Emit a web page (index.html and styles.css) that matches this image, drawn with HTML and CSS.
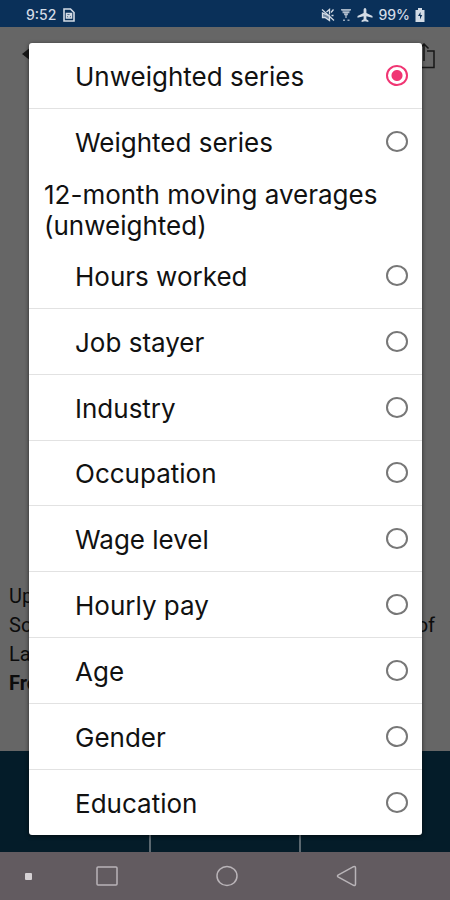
FILE: index.html
```html
<!DOCTYPE html>
<html lang="en">
<head>
<meta charset="utf-8">
<meta name="viewport" content="width=device-width, initial-scale=1">
<title>Series selection</title>
<link rel="stylesheet" href="styles.css">
</head>
<body>
<div class="screen">
  <header class="status">
    <span class="status-time">9:52</span>
    <svg class="status-doc" width="12" height="14" viewBox="0 0 12 14" fill="none" stroke="currentColor" stroke-width="1.6"><path d="M1 1h6.500l3.500 3.500V13H1zM3.500 5.500h5v4.500h-5zM4.500 7l1.500 1.500L8 6"/></svg>
    <span class="status-icons">
      <svg width="14" height="14" viewBox="0 0 14 14" fill="none" stroke="currentColor" stroke-width="1.300"><path d="M1 1.500l12 11M10 4.500l2.500-3M10.500 7.500h2"/><path d="M1.500 5v4.500H4l4.500 3V8z" fill="currentColor" fill-opacity=".5"/><path d="M5.500 4l3-2.500v5"/></svg>
      <svg width="12" height="14" viewBox="0 0 12 14" fill="none" stroke="currentColor" stroke-width="1.500"><path d="M1 1.800h10M2.500 4.500h7M4 6.500h4M6 7v3M3 12.300h2M7.500 12.300h2" opacity=".7"/><path d="M1 1.500h10L6 8z" fill="currentColor" fill-opacity=".5" stroke="none"/></svg>
      <svg width="16" height="14" viewBox="0 0 16 14" fill="currentColor"><path d="M8 0c1 0 1.400 1 1.400 2v3L15.500 8v1.700L9.400 8.300v3l2 1.200V14L8 13.200 4.600 14v-1.500l2-1.200v-3L.5 9.700V8l6.100-3V2C6.600 1 7 0 8 0z"/></svg>
      <span>99%</span>
      <svg width="10" height="14" viewBox="0 0 10 14"><path d="M3 0h4v2h2.500v12h-9V2H3z" fill="currentColor"/><path d="M5.500 4L3 8h2v3.500L7.200 7H5.500z" fill="#0a3059"/></svg>
    </span>
  </header>
  <div class="page">
    <div class="toolbar">
      <svg width="20" height="22" viewBox="0 0 20 22"><path d="M0 11L9 4v14z" fill="#171717"/></svg>
      <svg width="22" height="26" viewBox="0 0 22 26" fill="none" stroke="#171717" stroke-width="1.500"><path d="M8 8H1v16.500h20V8h-7M11 18V1M6.500 5.500L11 1l4.500 4.500"/></svg>
    </div>
    <div class="note">
      <p>Up to</p>
      <p class="note-split"><span>Sour</span><span>of</span></p>
      <p>Labor</p>
      <p><strong>From</strong></p>
    </div>
  </div>
  <div class="tabs"><span></span><span></span><span></span></div>
  <nav class="navbar">
    <i class="nav-dot"></i>
    <div class="nav-buttons">
      <button class="nav-button" aria-label="Recent apps"><svg width="24" height="24" viewBox="0 0 24 24"><rect x="2" y="3" width="20" height="18" rx="1"/></svg></button>
      <button class="nav-button" aria-label="Home"><svg width="24" height="24" viewBox="0 0 24 24"><ellipse cx="12" cy="12" rx="10" ry="9.500"/></svg></button>
      <button class="nav-button" aria-label="Back"><svg width="24" height="24" viewBox="0 0 24 24"><path d="M3 11.200L18.500 2.700q2-.8 2 1.300v16q0 2-2 1.300L3 12.800q-1-.8 0-1.600z"/></svg></button>
    </div>
  </nav>
  <form class="dialog" role="dialog" aria-label="Series">
    <label class="option"><span>Unweighted series</span><input type="radio" name="series" checked></label>
    <label class="option"><span>Weighted series</span><input type="radio" name="series"></label>
    <h2 class="group">12-month moving averages (unweighted)</h2>
    <label class="option"><span>Hours worked</span><input type="radio" name="series"></label>
    <label class="option"><span>Job stayer</span><input type="radio" name="series"></label>
    <label class="option"><span>Industry</span><input type="radio" name="series"></label>
    <label class="option"><span>Occupation</span><input type="radio" name="series"></label>
    <label class="option"><span>Wage level</span><input type="radio" name="series"></label>
    <label class="option"><span>Hourly pay</span><input type="radio" name="series"></label>
    <label class="option"><span>Age</span><input type="radio" name="series"></label>
    <label class="option"><span>Gender</span><input type="radio" name="series"></label>
    <label class="option"><span>Education</span><input type="radio" name="series"></label>
  </form>
</div>
</body>
</html>
```
FILE: styles.css
```css
* { box-sizing: border-box; }
body { margin: 0; font-family: Inter, "Noto Sans", sans-serif; }
.screen { position: relative; min-height: 100vh; display: flex; flex-direction: column; background: #666; }
.status { height: 27px; padding: 2px 25px 0 26px; display: flex; align-items: center; gap: 7px; background: #0a3059; color: #d3dbe5; font-size: 14px; font-weight: 500; }
.status-icons { margin-left: auto; display: flex; align-items: center; gap: 5px; }
.page { flex: 1; display: flex; flex-direction: column; justify-content: space-between; }
.toolbar { display: flex; justify-content: space-between; padding: 16px 15px 0 22px; }
.note { padding: 0 15px 53px 9px; font-family: Roboto, sans-serif; font-size: 20px; line-height: 29px; color: #0c0c0c; }
.note p { margin: 0; }
.note-split { display: flex; justify-content: space-between; }
.tabs { height: 101px; display: flex; background: #041c29; }
.tabs span { flex: 1; }
.tabs span + span { border-left: 2px solid #5b6870; }
.navbar { height: 48px; padding: 0 91px 0 25px; display: flex; align-items: center; gap: 63px; background: #625b60; }
.nav-dot { width: 7px; height: 7px; border-radius: 1px; background: #d5d1d4; }
.nav-buttons { flex: 1; display: flex; justify-content: space-between; }
.nav-button { width: 24px; height: 24px; padding: 0; border: 0; background: none; }
.nav-button svg { display: block; fill: none; stroke: #b9b4b8; stroke-width: 1.5px; }
.dialog { position: absolute; inset: 43px 28px 65px 29px; display: flex; flex-direction: column; background: #fff; border-radius: 3px; box-shadow: 0 1px 4px rgba(0, 0, 0, .6); color: #111; font-size: 26px; }
.option { flex: 1; padding: 0 14px 0 46px; display: flex; align-items: center; justify-content: space-between; line-height: 32px; }
.option + .option { border-top: 1px solid #e2e2e2; }
.option span { padding-top: 3px; }
.option input { appearance: none; width: 22px; height: 21px; margin: 0; border: 2px solid #777; border-radius: 50%; }
.option input:checked { border-color: #f03573; background: radial-gradient(circle, #f03573 5px, #fff 6px); }
.group { margin: 0; height: 69px; padding: 5px 15px; font-size: 26px; font-weight: 400; line-height: 31px; }
```
